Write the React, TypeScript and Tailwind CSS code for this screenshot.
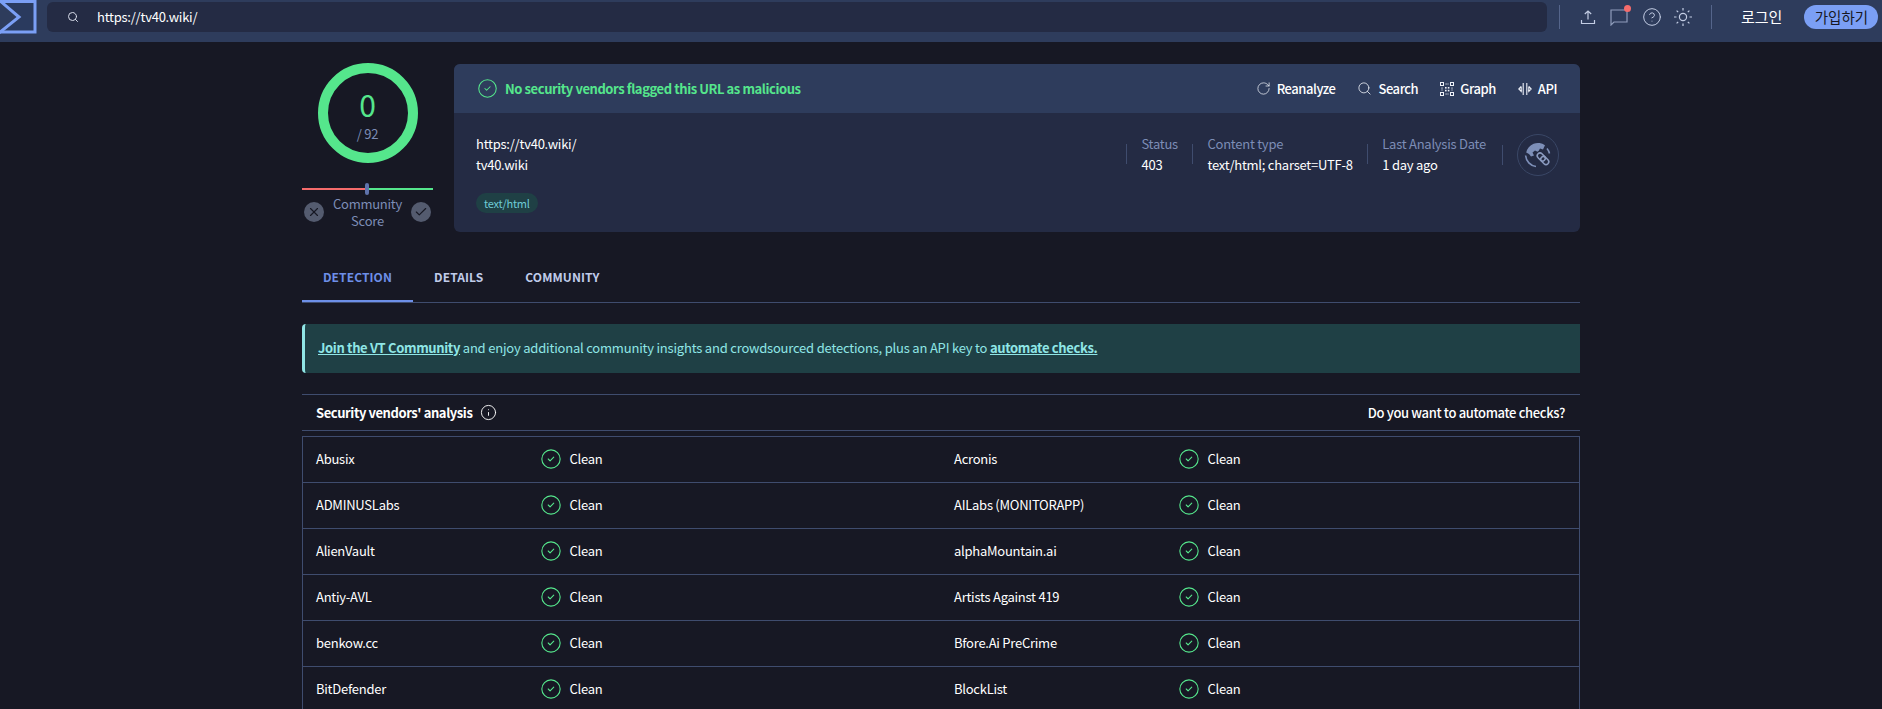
import type { ReactNode } from "react";
import { CircleCheck, CircleHelp, Info, RotateCw, Search, Check, X } from "lucide-react";

const vendors = [
  ["Abusix", "Acronis"],
  ["ADMINUSLabs", "AILabs (MONITORAPP)"],
  ["AlienVault", "alphaMountain.ai"],
  ["Antiy-AVL", "Artists Against 419"],
  ["benkow.cc", "Bfore.Ai PreCrime"],
  ["BitDefender", "BlockList"],
];

const Logo = () => (
  <svg viewBox="0 0 37 34" className="w-[37px] h-[34px] shrink-0">
    <path d="M0 0H37V34H0L19 17Z" fill="#2a3a5e" />
    <path d="M0 1.5H35V32H0" fill="none" stroke="#7b9ff5" strokeWidth="3" />
    <path d="M-1 0L19 17L-1 33" fill="none" stroke="#7b9ff5" strokeWidth="3" />
  </svg>
);

const UploadIcon = () => (
  <svg viewBox="0 0 16 16" fill="none" stroke="#c3cde4" strokeWidth="1.2" className="w-[16px] h-[16px]">
    <path d="M8 10.5V2M4.8 5L8 2L11.2 5M1.5 11V14.5H14.5V11" />
  </svg>
);

const ChatIcon = () => (
  <div className="relative ml-[14px]">
    <svg viewBox="0 0 18 18" fill="none" stroke="#8f9cbb" strokeWidth="1.2" className="w-[18px] h-[18px]">
      <path d="M1 2H17V14H4L1 17Z" />
    </svg>
    <span className="absolute -right-[3px] -top-[3px] w-[7px] h-[7px] rounded-full bg-[#f56b6b]" />
  </div>
);

const SunIcon = () => (
  <svg viewBox="0 0 20 20" fill="none" stroke="#c3cde4" strokeWidth="1.2" className="ml-[11px] w-[20px] h-[20px]">
    <circle cx="10" cy="10" r="3.6" />
    <path d="M10 1V3.5M10 16.5V19M1 10H3.5M16.5 10H19M3.6 3.6L5.2 5.2M14.8 14.8L16.4 16.4M3.6 16.4L5.2 14.8M14.8 5.2L16.4 3.6" />
  </svg>
);

const GraphIcon = () => (
  <svg viewBox="0 0 14 14" fill="none" stroke="#eef1f8" strokeWidth="1" className="w-[14px] h-[14px]">
    <rect x="0.5" y="0.5" width="3" height="3" />
    <rect x="10.5" y="0.5" width="3" height="3" />
    <rect x="0.5" y="10.5" width="3" height="3" />
    <rect x="10.5" y="10.5" width="3" height="3" />
    <path d="M5.5 2H8.5M5.5 12H8.5M2 5.5V8.5M12 5.5V8.5" strokeDasharray="1.2 0.8" />
    <rect x="5" y="5" width="1.6" height="1.6" fill="#eef1f8" stroke="none" />
    <rect x="7.8" y="7.8" width="1.6" height="1.6" fill="#eef1f8" stroke="none" />
    <rect x="7.8" y="5" width="1.6" height="1.6" fill="#eef1f8" stroke="none" />
    <rect x="5" y="7.8" width="1.6" height="1.6" fill="#eef1f8" stroke="none" />
  </svg>
);

const ApiIcon = () => (
  <svg viewBox="0 0 14 14" fill="none" stroke="#eef1f8" strokeWidth="1.1" className="w-[14px] h-[14px]">
    <path d="M5.2 1V13M8.8 1V13M3.2 4.5L0.8 7L3.2 9.5V4.5M10.8 4.5L13.2 7L10.8 9.5V4.5" />
  </svg>
);

const GlobeLink = () => (
  <div className="w-[42px] h-[42px] rounded-full border border-[#3a4766] flex items-center justify-center">
    <svg viewBox="0 0 28 28" className="w-[28px] h-[28px]">
      <path d="M2.2 11.5A12 12 0 0 1 21 4.2L19 8.5L16 7.5L14 11L11 9.5L8.5 11.5L10 14.5L7 15.5L5 13Z" fill="#7d8fb8" />
      <path d="M1.6 14.5A12 12 0 0 0 12 25.5M23 7.5A12 12 0 0 1 25.5 12.5" fill="none" stroke="#7d8fb8" strokeWidth="1.6" />
      <g fill="none" stroke="#242b44" strokeWidth="4">
        <rect x="14.5" y="11.5" width="5.5" height="9" rx="2.75" transform="rotate(-45 17.25 16)" />
        <rect x="18" y="15" width="5.5" height="9" rx="2.75" transform="rotate(-45 20.75 19.5)" />
      </g>
      <g fill="none" stroke="#8b9bc0" strokeWidth="1.5">
        <rect x="14.5" y="11.5" width="5.5" height="9" rx="2.75" transform="rotate(-45 17.25 16)" />
        <rect x="18" y="15" width="5.5" height="9" rx="2.75" transform="rotate(-45 20.75 19.5)" />
      </g>
    </svg>
  </div>
);

const Meta = ({ label, value }: { label: string; value: string }) => (
  <div className="h-[40px] flex items-center">
    <div className="border-l border-[#3f4c6e] h-[20px] pl-[14.5px] flex flex-col justify-center whitespace-nowrap">
      <div className="text-[#7d8db6] leading-[21px]">{label}</div>
      <div className="text-white leading-[21px]">{value}</div>
    </div>
  </div>
);

const Action = ({ icon, label }: { icon: ReactNode; label: string }) => (
  <div className="flex items-center gap-[6px] text-white font-medium tracking-[-0.45px]">
    {icon}
    <span>{label}</span>
  </div>
);

const VendorCell = ({ name }: { name: string }) => (
  <div className="flex items-center pl-[13px] pb-[2px]">
    <span className="w-[223.5px] text-white">{name}</span>
    <CircleCheck className="w-[22px] h-[22px] text-[#55e68c]" strokeWidth={1.2} />
    <span className="ml-[8px] text-white">Clean</span>
  </div>
);

export default function App() {
  return (
    <div className="h-[709px] overflow-hidden bg-[#171824] text-[13px] tracking-[-0.25px] font-['Noto_Sans_CJK_KR',sans-serif]">
      <header className="h-[42px] bg-[#2e3c5c] flex items-start">
        <Logo />
        <div className="ml-[10px] mt-[2px] h-[30px] w-[1500px] rounded-md bg-[#242b44] flex items-center">
          <Search className="ml-[20px] w-[12px] h-[12px] text-[#d7dcea]" strokeWidth={2} />
          <span className="ml-[18px] text-white">https://tv40.wiki/</span>
        </div>
        <div className="ml-[12px] mt-[5px] h-[24px] w-px bg-[#55658b]" />
        <div className="ml-[20px] h-[34px] flex items-center">
          <UploadIcon />
          <ChatIcon />
          <CircleHelp className="ml-[14px] w-[20px] h-[20px] text-[#c3cde4]" strokeWidth={1.2} />
          <SunIcon />
        </div>
        <div className="ml-[18px] mt-[5px] h-[24px] w-px bg-[#55658b]" />
        <span className="ml-[29px] mt-[6px] text-[15px] tracking-normal text-white">로그인</span>
        <span className="ml-[22px] mt-[5px] h-[24px] w-[74px] rounded-full bg-[#7b9ff5] text-[14.5px] tracking-normal text-[#171824] flex items-center justify-center">가입하기</span>
      </header>

      <main className="mx-auto w-[1278px]">
        <section className="pt-[22px] flex">
          <div className="-mt-[1px] w-[131px] shrink-0 flex flex-col items-center">
            <div className="w-[100px] h-[100px] rounded-full border-[10px] border-[#55e68c] flex flex-col items-center pt-[15px]">
              <span className="text-[#55e68c] text-[30px] leading-[32px]">0</span>
              <span className="mt-[5px] text-[#7d8db6] leading-[18px]">/ 92</span>
            </div>
            <div className="relative mt-[25px] w-full h-[2px] flex">
              <div className="w-1/2 bg-[#f56b6b]" />
              <div className="w-1/2 bg-[#55e68c]" />
              <div className="absolute left-[63px] -top-[5px] w-[4px] h-[12px] rounded-sm bg-[#5f73ac]" />
            </div>
            <div className="mt-[5px] w-full flex items-center justify-between px-[2px]">
              <span className="w-[20px] h-[20px] rounded-full bg-[#545b6f] flex items-center justify-center">
                <X className="w-[14px] h-[14px] text-[#171824]" strokeWidth={2} />
              </span>
              <span className="text-[#7d8db6] text-center leading-[17px]">Community<br />Score</span>
              <span className="w-[20px] h-[20px] rounded-full bg-[#545b6f] flex items-center justify-center">
                <Check className="w-[14px] h-[14px] text-[#171824]" strokeWidth={2} />
              </span>
            </div>
          </div>

          <div className="ml-[21px] flex-1 h-[168px] rounded-md overflow-hidden bg-[#242b44]">
            <div className="h-[49px] bg-[#2e3c5c] flex items-center pl-[23px] pr-[23px]">
              <CircleCheck className="w-[21px] h-[21px] text-[#55e68c]" strokeWidth={1.2} />
              <span className="ml-[7px] text-[#55e68c] font-bold tracking-[-0.42px]">No security vendors flagged this URL as malicious</span>
              <div className="ml-auto flex items-center gap-[22px]">
                <Action icon={<RotateCw className="w-[15px] h-[15px] text-[#eef1f8]" strokeWidth={1.2} />} label="Reanalyze" />
                <Action icon={<Search className="w-[15px] h-[15px] text-[#eef1f8]" strokeWidth={1.3} />} label="Search" />
                <Action icon={<GraphIcon />} label="Graph" />
                <Action icon={<ApiIcon />} label="API" />
              </div>
            </div>
            <div className="flex pl-[22px] pr-[21px] pt-[21px]">
              <div className="-mt-[1px]">
                <div className="text-white leading-[21px]">https://tv40.wiki/</div>
                <div className="text-white leading-[21px]">tv40.wiki</div>
                <span className="mt-[18px] inline-flex h-[20px] items-center rounded-full bg-[#1f4045] px-[8px] text-[11px] text-[#6ecbd6]">text/html</span>
              </div>
              <div className="ml-auto flex items-start gap-[14px] h-[42px]">
                <Meta label="Status" value="403" />
                <Meta label="Content type" value="text/html; charset=UTF-8" />
                <div className="pr-[2px]"><Meta label="Last Analysis Date" value="1 day ago" /></div>
                <div className="h-[42px] flex items-center"><div className="border-l border-[#3f4c6e] h-[20px]" /></div>
                <GlobeLink />
              </div>
            </div>
          </div>
        </section>

        <nav className="mt-[23px] h-[48px] border-b border-[#3f4c6e] flex text-[12px] tracking-[0.1px] font-bold">
          <div className="w-[111px] h-[47px] pb-[2px] border-b-2 border-[#6d8fe8] text-[#6d8fe8] flex items-center justify-center">DETECTION</div>
          <div className="ml-[21px] h-[43px] flex items-center text-[#c0ccea]">DETAILS</div>
          <div className="ml-[42px] h-[43px] flex items-center text-[#c0ccea]">COMMUNITY</div>
        </nav>

        <div className="mt-[21px] h-[49px] rounded-l-sm border-l-[3px] border-[#90e5e5] bg-[#1f4045] pl-[13px] pb-[2px] flex items-center text-[#8fe6e6] tracking-[-0.2px]">
          <span><a className="font-bold underline tracking-[-0.35px]">Join the VT Community</a> and enjoy additional community insights and crowdsourced detections, plus an API key to <a className="font-bold underline tracking-[-0.35px]">automate checks.</a></span>
        </div>

        <div className="mt-[21px] h-[37px] border-y border-[#3f4c6e] flex items-center pl-[14px] pr-[15px] text-white font-bold tracking-[-0.42px]">
          <span>Security vendors' analysis</span>
          <Info className="ml-[8px] w-[17px] h-[17px]" strokeWidth={1.3} />
          <span className="ml-auto font-medium tracking-[-0.35px]">Do you want to automate checks?</span>
        </div>

        <div className="mt-[5px] border border-[#3f4c6e] border-b-0">
          {vendors.map(([left, right]) => (
            <div key={left} className="h-[46px] grid grid-cols-2 border-b border-[#3f4c6e]">
              <VendorCell name={left} />
              <VendorCell name={right} />
            </div>
          ))}
        </div>
      </main>
    </div>
  );
}
